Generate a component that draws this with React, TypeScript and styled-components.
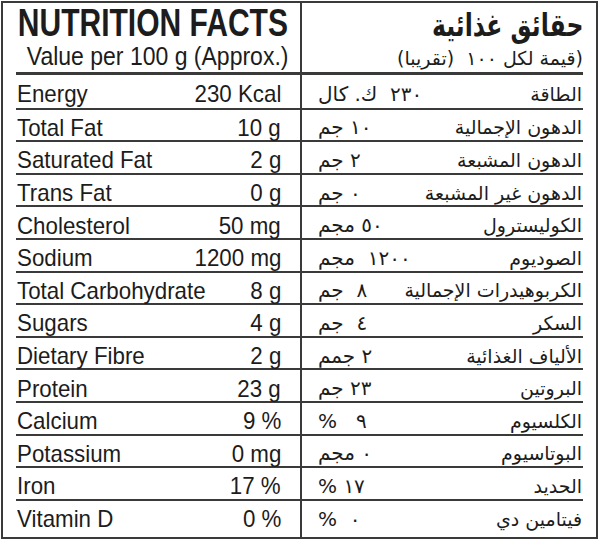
import React from "react";
import styled, { createGlobalStyle } from "styled-components";

const Global = createGlobalStyle`
  html, body { margin: 0; padding: 0; background: #ffffff; }
  body { width: 600px; height: 541px; overflow: hidden; }
`;

const EN = `"Liberation Sans", Arial, sans-serif`;
const AR = `"DejaVu Sans", sans-serif`;
const INK = "#1c1c1c";
const LINE = "#3a3a3a";

const Frame = styled.div`
  margin: 1px 0 0 1px;
  width: 593px;
  height: 534px;
  border: 2px solid ${LINE};
  display: grid;
  grid-template-columns: 299px 1fr;
  color: ${INK};
`;

const Column = styled.div<{ $rtl?: boolean }>`
  display: flex;
  flex-direction: column;
  direction: ${(p) => (p.$rtl ? "rtl" : "ltr")};
  padding: ${(p) => (p.$rtl ? "0 13px 0 0" : "0 0 0 13px")};
  border-right: ${(p) => (p.$rtl ? "none" : `2px solid ${LINE}`)};
  min-width: 0;
`;

const Header = styled.div<{ $rtl?: boolean }>`
  height: 72px;
  border-bottom: 3px solid ${LINE};
  display: flex;
  flex-direction: column;
  align-items: ${(p) => (p.$rtl ? "flex-start" : "flex-end")};
  padding: ${(p) => (p.$rtl ? "1px 0 0 0" : "1px 12px 0 0")};
  box-sizing: border-box;
`;

/* Condensed look: the reference face is a narrow grotesque */
const Squeeze = styled.span<{ $sx: number; $origin: "left" | "right" }>`
  display: inline-block;
  white-space: pre;
  transform: scaleX(${(p) => p.$sx});
  transform-origin: ${(p) => p.$origin} center;
`;

const TitleEn = styled(Squeeze)`
  font-family: ${EN};
  font-weight: 700;
  font-size: 38px;
  line-height: 38px;
`;

const SubEn = styled(Squeeze)`
  font-family: ${EN};
  font-size: 25px;
  line-height: 28px;
`;

const TitleAr = styled(Squeeze)`
  font-family: ${AR};
  font-weight: 700;
  font-size: 31px;
  line-height: 42px;
`;

const SubAr = styled.span`
  font-family: ${AR};
  font-size: 19px;
  line-height: 24px;
  white-space: pre;
`;

const Rows = styled.div`
  display: flex;
  flex-direction: column;
`;

const Row = styled.div<{ $rtl?: boolean }>`
  height: 32.6px;
  box-sizing: border-box;
  display: flex;
  align-items: center;
  justify-content: space-between;
  padding: ${(p) => (p.$rtl ? "5px 1px 0 0" : "5px 19px 0 1px")};
  & + & {
    border-top: 2px solid ${LINE};
  }
`;

const CellEn = styled(Squeeze)`
  font-family: ${EN};
  font-size: 24px;
  line-height: 27px;
`;

const LabelAr = styled.span`
  font-family: ${AR};
  font-size: 19px;
  white-space: pre;
`;

const ValueAr = styled.span`
  font-family: ${AR};
  font-size: 20px;
  white-space: pre;
  margin-left: 16px;
`;

const data: [string, string, string, string][] = [
  ["Energy", "230 Kcal", "الطاقة", "٢٣٠  ك. كال"],
  ["Total Fat", "10 g", "الدهون الإجمالية", "١٠ جم"],
  ["Saturated Fat", "2 g", "الدهون المشبعة", "٢ جم"],
  ["Trans Fat", "0 g", "الدهون غير المشبعة", "٠ جم"],
  ["Cholesterol", "50 mg", "الكوليسترول", "٥٠ مجم"],
  ["Sodium", "1200 mg", "الصوديوم", "١٢٠٠  مجم"],
  ["Total Carbohydrate", "8 g", "الكربوهيدرات الإجمالية", "٨  جم"],
  ["Sugars", "4 g", "السكر", "٤  جم"],
  ["Dietary Fibre", "2 g", "الألياف الغذائية", "٢ جمم"],
  ["Protein", "23 g", "البروتين", "٢٣ جم"],
  ["Calcium", "9 %", "الكلسيوم", "٩   %"],
  ["Potassium", "0 mg", "البوتاسيوم", "٠ مجم"],
  ["Iron", "17 %", "الحديد", "١٧ %"],
  ["Vitamin D", "0 %", "فيتامين دي", "٠  %"],
];

export default function App() {
  return (
    <>
      <Global />
      <Frame>
        <Column>
          <Header>
            <TitleEn $sx={0.79} $origin="right">NUTRITION FACTS</TitleEn>
            <SubEn $sx={0.92} $origin="right">Value per 100 g (Approx.)</SubEn>
          </Header>
          <Rows>
            {data.map((d) => (
              <Row key={d[0]}>
                <CellEn $sx={0.93} $origin="left">{d[0]}</CellEn>
                <CellEn $sx={0.93} $origin="right">{d[1]}</CellEn>
              </Row>
            ))}
          </Rows>
        </Column>
        <Column $rtl>
          <Header $rtl>
            <TitleAr $sx={0.76} $origin="right">حقائق غذائية</TitleAr>
            <SubAr>{"(قيمة لكل ١٠٠  (تقريبا)"}</SubAr>
          </Header>
          <Rows>
            {data.map((d) => (
              <Row key={d[0]} $rtl>
                <LabelAr>{d[2]}</LabelAr>
                <ValueAr>{d[3]}</ValueAr>
              </Row>
            ))}
          </Rows>
        </Column>
      </Frame>
    </>
  );
}
